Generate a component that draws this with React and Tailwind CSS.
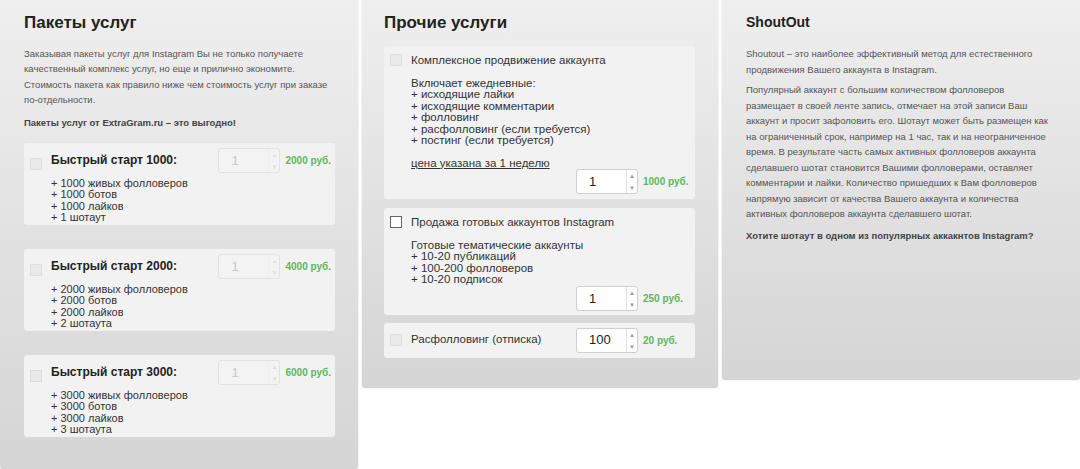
import React from "react";

const Spin = ({ value, disabled }) => (
  <div className={`flex items-center w-[62px] h-[25px] border rounded-[3px] ${disabled ? "border-[#e2e2e2] bg-[#f3f3f3] text-[#c8c8c8]" : "border-[#cfcfcf] bg-white text-[#222]"}`}>
    <span className="flex-1 pl-[12px] text-[13px]">{value}</span>
    <div className={`flex flex-col justify-between h-full w-[11px] border-l text-[6px] leading-[12px] text-center ${disabled ? "border-[#eee] text-[#ddd]" : "border-[#e2e2e2] text-[#999]"}`}>
      <span>▲</span>
      <span>▼</span>
    </div>
  </div>
);

const Box = ({ light }) => (
  <span className={`inline-block w-[12px] h-[12px] border shrink-0 ${light ? "border-[#ddd] bg-[#eaeaea]" : "border-[#666] bg-white"}`} />
);

const packs = [
  { n: "1000", price: "2000 руб.", items: ["+ 1000 живых фолловеров", "+ 1000 ботов", "+ 1000 лайков", "+ 1 шотаут"] },
  { n: "2000", price: "4000 руб.", items: ["+ 2000 живых фолловеров", "+ 2000 ботов", "+ 2000 лайков", "+ 2 шотаута"] },
  { n: "3000", price: "6000 руб.", items: ["+ 3000 живых фолловеров", "+ 3000 ботов", "+ 3000 лайков", "+ 3 шотаута"] },
];

const panel = "bg-gradient-to-b from-[#efefef] to-[#d5d5d5] rounded-b-[3px] shadow-[0_0_2px_rgba(0,0,0,0.15)]";

export default function App() {
  return (
    <div className="w-[1080px] h-[469px] bg-white flex gap-[4px] items-start overflow-hidden text-[#333]" style={{ fontFamily: "'Liberation Sans', Arial, sans-serif" }}>
      {/* Left */}
      <div className={`${panel} w-[358px] h-[469px] px-[24px] pt-[10px]`}>
        <h2 className="text-[17px] font-bold text-[#222] mb-[10px]">Пакеты услуг</h2>
        <p className="text-[9.5px] leading-[15.5px] text-[#555]">
          Заказывая пакеты услуг для Instagram Вы не только получаете качественный комплекс услуг, но еще и прилично экономите. Стоимость пакета как правило ниже чем стоимость услуг при заказе по-отдельности.
        </p>
        <p className="text-[9.5px] font-bold text-[#444] mt-[8px] mb-[13px]">Пакеты услуг от ExtraGram.ru – это выгодно!</p>
        <div className="flex flex-col gap-[24px]">
          {packs.map((p) => (
            <div key={p.n} className="bg-[#f2f2f2] rounded-[3px] w-[311px] h-[82px] pl-[6px] pr-[4px] pt-[5px]">
              <div className="flex items-start">
                <div className="pt-[5px] mr-[9px]"><Box light /></div>
                <span className="text-[12px] font-bold text-[#222] pt-[3px] flex-1">Быстрый старт {p.n}:</span>
                <Spin value="1" disabled />
                <span className="text-[10px] font-bold text-[#5cb85c] ml-[5px] pt-[5px]">{p.price}</span>
              </div>
              <div className="pl-[21px] text-[11px] leading-[11.5px] text-[#333] mt-[1px]">
                {p.items.map((i) => <div key={i}>{i}</div>)}
              </div>
            </div>
          ))}
        </div>
      </div>

      {/* Middle */}
      <div className={`${panel} w-[356px] h-[388px] px-[22px] pt-[10px]`}>
        <h2 className="text-[17px] font-bold text-[#222] mb-[10px]">Прочие услуги</h2>
        <div className="bg-[#f2f2f2] rounded-[3px] w-[311px] h-[153px] pl-[6px] pr-[4px] pt-[6px]">
          <div className="flex items-center gap-[9px] text-[11.5px]"><Box light />Комплексное продвижение аккаунта</div>
          <div className="pl-[21px] text-[11.5px] leading-[11.5px] mt-[9px]">
            <div>Включает ежедневные:</div>
            <div>+ исходящие лайки</div>
            <div>+ исходящие комментарии</div>
            <div>+ фолловинг</div>
            <div>+ расфолловинг (если требуется)</div>
            <div>+ постинг (если требуется)</div>
            <div className="underline mt-[11px]">цена указана за 1 неделю</div>
          </div>
          <div className="flex items-center justify-end">
            <Spin value="1" />
            <span className="text-[10px] font-bold text-[#5cb85c] ml-[5px] w-[48px]">1000 руб.</span>
          </div>
        </div>
        <div className="bg-[#f2f2f2] rounded-[3px] w-[311px] h-[107px] pl-[6px] pr-[4px] pt-[6px] mt-[9px]">
          <div className="flex items-center gap-[9px] text-[11.5px]"><Box />Продажа готовых аккаунтов Instagram</div>
          <div className="pl-[21px] text-[11.5px] leading-[11.5px] mt-[9px]">
            <div>Готовые тематические аккаунты</div>
            <div>+ 10-20 публикаций</div>
            <div>+ 100-200 фолловеров</div>
            <div>+ 10-20 подписок</div>
          </div>
          <div className="flex items-center justify-end">
            <Spin value="1" />
            <span className="text-[10px] font-bold text-[#5cb85c] ml-[5px] w-[48px]">250 руб.</span>
          </div>
        </div>
        <div className="bg-[#f2f2f2] rounded-[3px] w-[311px] h-[35px] pl-[6px] pr-[4px] mt-[8px] flex items-center">
          <div className="flex items-center gap-[9px] text-[11.5px] flex-1"><Box light />Расфолловинг (отписка)</div>
          <Spin value="100" />
          <span className="text-[10px] font-bold text-[#5cb85c] ml-[5px] w-[48px]">20 руб.</span>
        </div>
      </div>

      {/* Right */}
      <div className={`${panel} w-[358px] h-[380px] px-[24px] pt-[12px]`}>
        <h2 className="text-[14px] font-bold text-[#222] mb-[13px]">ShoutOut</h2>
        <p className="text-[9.5px] leading-[15.5px] text-[#555]">
          Shoutout – это наиболее эффективный метод для естественного продвижения Вашего аккаунта в Instagram.
        </p>
        <p className="text-[9.5px] leading-[15.5px] text-[#555] mt-[5px]">
          Популярный аккаунт с большим количеством фолловеров размещает в своей ленте запись, отмечает на этой записи Ваш аккаунт и просит зафоловить его. Шотаут может быть размещен как на ограниченный срок, например на 1 час, так и на неограниченное время. В результате часть самых активных фолловеров аккаунта сделавшего шотат становится Вашими фолловерами, оставляет комментарии и лайки. Количество пришедших к Вам фолловеров напрямую зависит от качества Вашего аккаунта и количества активных фолловеров аккаунта сделавшего шотат.
        </p>
        <p className="text-[9.5px] font-bold text-[#444] mt-[7px]">Хотите шотаут в одном из популярных аккакнтов Instagram?</p>
      </div>
    </div>
  );
}
